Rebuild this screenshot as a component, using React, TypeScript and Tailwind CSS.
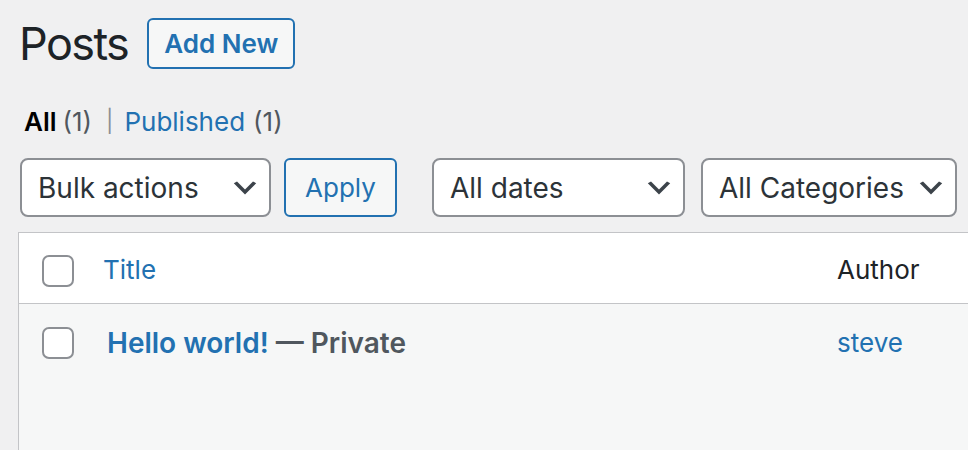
function Chevron() {
  return (
    <svg width="32" height="32" viewBox="0 0 20 20" className="shrink-0">
      <path d="M5 6l5 5 5-5 2 1-7 7-7-7 2-1z" fill="#3c434a" />
    </svg>
  );
}

function Select({ label, width }: { label: string; width: string }) {
  return (
    <div
      className={`flex h-[59px] items-center justify-between rounded-[8px] border-2 border-[#8c8f94] bg-white pl-[16px] pr-[8px] text-[28px] text-[#2c3338] ${width}`}
    >
      <span>{label}</span>
      <Chevron />
    </div>
  );
}

function Checkbox() {
  return <div className="h-[32px] w-[32px] shrink-0 rounded-[7px] border-2 border-[#8c8f94] bg-white" />;
}

export default function App() {
  return (
    <div
      className="h-[450px] w-[968px] overflow-hidden bg-[#f0f0f1] text-[#1d2327]"
      style={{ fontFamily: "Inter, 'Noto Sans', sans-serif" }}
    >
      <div className="mt-[18px] flex h-[51px] items-center pl-[19px]">
        <h1 className="text-[45px] font-normal leading-none tracking-[-1.6px] text-[#1d2327]">Posts</h1>
        <button className="ml-[19px] flex h-[51px] w-[148px] items-center justify-center rounded-[6px] border-2 border-[#2271b1] bg-[#f6f7f7] text-[26px] font-semibold text-[#2271b1]">
          Add New
        </button>
      </div>

      <div className="mt-[32px] flex h-[40px] items-center pl-[24px] text-[26px]">
        <span className="font-semibold text-black">All</span>
        <span className="ml-[6px] text-[#50575e]">(1)</span>
        <span className="ml-[14px] mr-[11px] text-[22px] text-[#8c8f94]">|</span>
        <span className="text-[#2271b1]">Published</span>
        <span className="ml-[8px] text-[#50575e]">(1)</span>
      </div>

      <div className="mt-[17px] flex items-center pl-[20px]">
        <Select label="Bulk actions" width="w-[251px]" />
        <button className="ml-[13px] flex h-[59px] w-[113px] items-center justify-center rounded-[6px] border-2 border-[#2271b1] bg-[#f6f7f7] text-[26px] text-[#2271b1]">
          Apply
        </button>
        <div className="ml-[35px]">
          <Select label="All dates" width="w-[253px]" />
        </div>
        <div className="ml-[16px]">
          <Select label="All Categories" width="w-[256px]" />
        </div>
      </div>

      <div className="ml-[18px] mt-[15px] w-[1000px] border-l border-t border-[#c3c4c7]">
        <div className="flex h-[71px] items-center border-b border-[#c3c4c7] bg-white">
          <div className="flex w-[84px] pl-[23px] pt-[5px]">
            <Checkbox />
          </div>
          <div className="w-[734px] pt-[2px] text-[26px] text-[#2271b1]">Title</div>
          <div className="pt-[2px] text-[26px] text-[#1d2327]">Author</div>
        </div>
        <div className="flex h-[160px] items-start bg-[#f6f7f7] pt-[23px]">
          <div className="flex w-[84px] pl-[23px]">
            <Checkbox />
          </div>
          <div className="w-[734px] pl-[4px] text-[28px] font-semibold leading-[32px]">
            <span className="text-[#2271b1]">Hello world!</span>
            <span className="text-[#50575e]"> — Private</span>
          </div>
          <div className="text-[26px] leading-[32px] text-[#2271b1]">steve</div>
        </div>
      </div>
    </div>
  );
}
